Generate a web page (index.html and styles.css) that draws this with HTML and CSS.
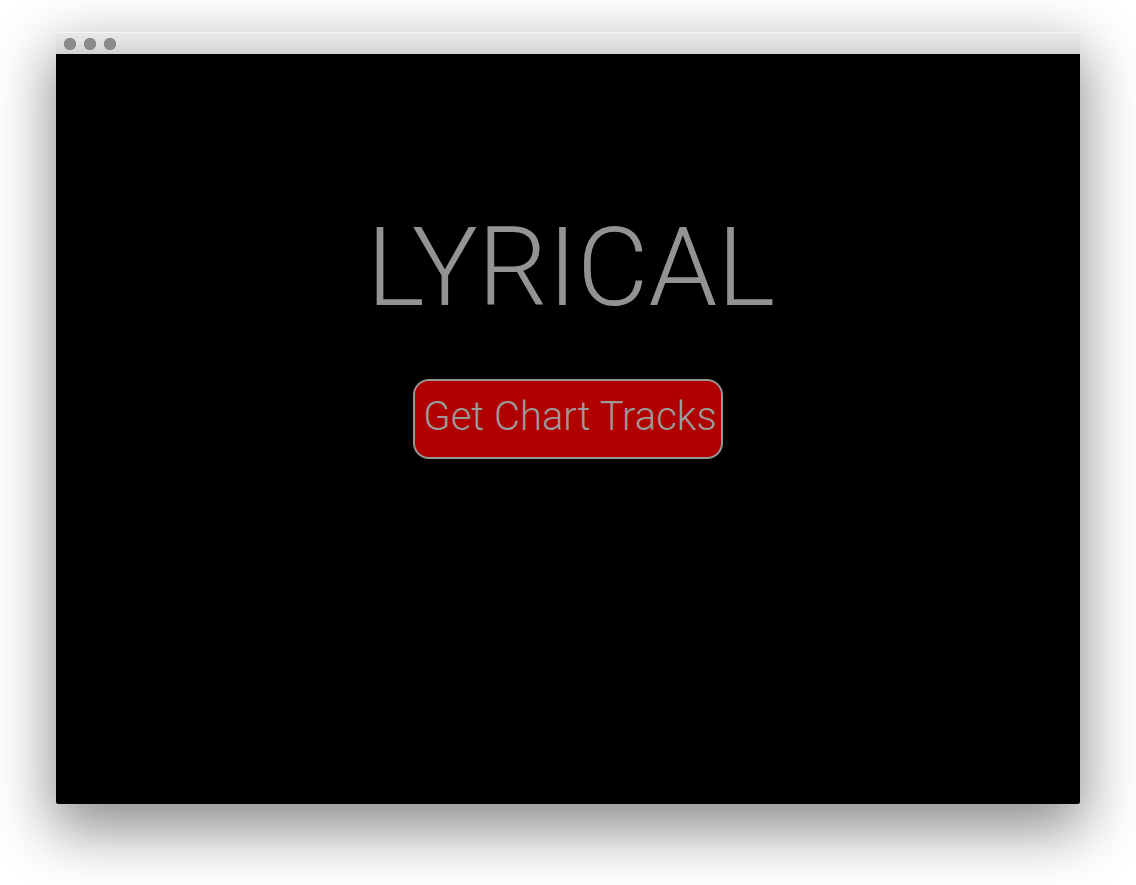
FILE: index.html
```html
<!DOCTYPE html>
<html>
<head>
<meta charset="utf-8">
<link rel="stylesheet" href="styles.css">
</head>
<body>
<div class="window">
  <div class="titlebar">
    <span class="dot"></span><span class="dot"></span><span class="dot"></span>
  </div>
  <div class="content">
    <h1 class="title">LYRICAL</h1>
    <button class="cta">Get Chart Tracks</button>
  </div>
</div>
</body>
</html>
```

FILE: styles.css
```css
html, body {
  margin: 0;
  padding: 0;
  background: #ffffff;
}
body {
  padding: 32px 56px 0 56px;
  height: 885px;
  box-sizing: border-box;
  overflow: hidden;
}
.window {
  width: 1024px;
  border-radius: 5px 5px 2px 2px;
  box-shadow: 0 22px 60px 4px rgba(0,0,0,0.45);
  overflow: hidden;
}
.titlebar {
  height: 22px;
  box-sizing: border-box;
  background: linear-gradient(#ebe9eb, #d5d3d5);
  border-top: 1px solid #f4f4f4;
  display: flex;
  align-items: center;
  gap: 8px;
  padding-left: 8px;
}
.dot {
  width: 12px;
  height: 12px;
  border-radius: 50%;
  background: #8c8b8e;
  box-shadow: inset 0 0 0 0.5px #7a797c;
}
.content {
  height: 750px;
  background: #000;
  display: flex;
  flex-direction: column;
  align-items: center;
  padding-top: 152px;
  box-sizing: border-box;
}
.title {
  margin: 0 0 0 6px;
  font-family: Roboto, "Liberation Sans", sans-serif;
  font-weight: 300;
  font-size: 110px;
  line-height: 124px;
  color: #939393;
}
.cta {
  margin-top: 49px;
  width: 310px;
  height: 80px;
  border: 2px solid #959595;
  border-radius: 16px;
  background: #b10000;
  color: #9a9a9a;
  font-family: Roboto, "Liberation Sans", sans-serif;
  font-weight: 300;
  font-size: 40px;
  padding: 0 0 5px 4px;
  text-align: center;
}
```
